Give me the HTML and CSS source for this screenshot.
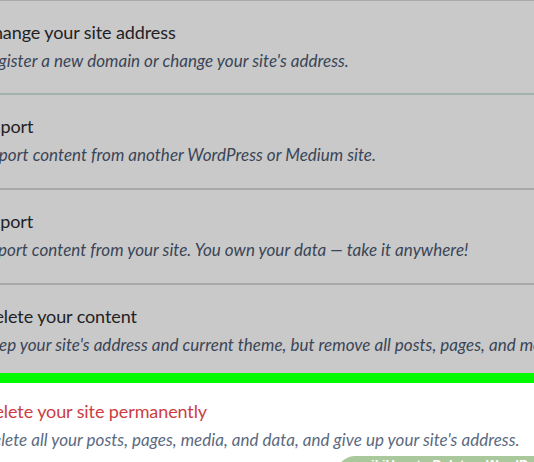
FILE: index.html
```html
<!DOCTYPE html>
<html lang="en">
<head>
<meta charset="utf-8">
<link rel="stylesheet" href="styles.css">
</head>
<body>
<div class="page">
  <div class="list">
    <div class="row row-first sep-teal">
      <div class="title">Change your site address</div>
      <div class="desc">Register a new domain or change your site's address.</div>
    </div>
    <div class="row">
      <div class="title">Import</div>
      <div class="desc">Import content from another WordPress or Medium site.</div>
    </div>
    <div class="row">
      <div class="title">Export</div>
      <div class="desc">Export content from your site. You own your data — take it anywhere!</div>
    </div>
    <div class="row row-last">
      <div class="title">Delete your content</div>
      <div class="desc">Keep your site's address and current theme, but remove all posts, pages, and media.</div>
    </div>
    <div class="highlight"></div>
    <div class="row row-danger">
      <div class="title title-danger">Delete your site permanently</div>
      <div class="desc desc-danger">Delete all your posts, pages, media, and data, and give up your site's address.</div>
    </div>
  </div>
  <div class="tab"><span class="tab-text">wikiHow to Delete a WordPress Site</span></div>
</div>
</body>
</html>
```
FILE: styles.css
```css
html, body {
  margin: 0;
  padding: 0;
  width: 534px;
  height: 462px;
  overflow: hidden;
  background: #ffffff;
}
.page {
  position: relative;
  width: 534px;
  height: 462px;
  overflow: hidden;
  font-family: Lato, "Open Sans", sans-serif;
}
.list {
  display: flex;
  flex-direction: column;
  border-top: 1px solid #a9a9a9;
  margin-left: -19px;
  width: 620px;
}
.row {
  background: #c9c9c9;
  height: 95px;
  box-sizing: border-box;
  padding-top: 19px;
  border-bottom: 2px solid #a8aaaa;
  white-space: nowrap;
}
.row-first {
  height: 94px;
}
.sep-teal {
  border-bottom-color: #a2b0ae;
}
.row-last {
  height: 88px;
  border-bottom: none;
}
.highlight {
  height: 10px;
  background: #00fb00;
}
.row-danger {
  background: #ffffff;
  border-bottom: none;
  padding-top: 16px;
  height: 79px;
}
.title {
  font-size: 18px;
  line-height: 24px;
  letter-spacing: -0.1px;
  color: #1f2224;
}
.desc {
  margin-top: 6px;
  font-size: 17px;
  line-height: 22px;
  letter-spacing: 0.03px;
  font-style: italic;
  color: #3a4557;
}
.title-danger {
  color: #cc3d43;
}
.desc-danger {
  color: #5c6a80;
}
.tab {
  position: absolute;
  left: 330px;
  top: 456px;
  width: 230px;
  height: 24px;
  background: #a9c89b;
  border-radius: 10px 0 0 0;
  transform: skewX(-30deg);
  transform-origin: bottom left;
}
.tab-text {
  display: block;
  transform: skewX(30deg);
  padding: 1px 0 0 22px;
  font-family: "Liberation Sans", Arial, sans-serif;
  font-weight: bold;
  font-size: 13px;
  line-height: 16px;
  color: #ffffff;
  white-space: nowrap;
}
```
